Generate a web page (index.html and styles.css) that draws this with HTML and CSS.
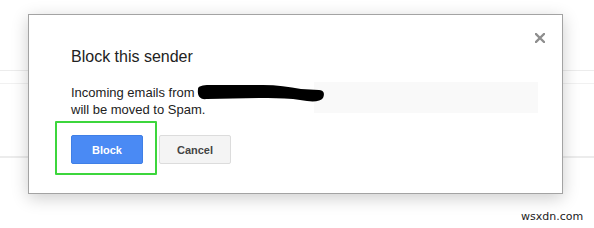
FILE: index.html
```html
<!DOCTYPE html>
<html lang="en">
<head>
    <meta charset="UTF-8">
    <title>Block this sender</title>
    <link rel="stylesheet" href="styles.css">
</head>
<body>
    <div class="mail-list">
        <div class="row row-top"></div>
        <div class="row row-thin"></div>
        <div class="row row-mid"></div>
        <div class="row"></div>
    </div>

    <div class="dialog">
        <button class="close-btn" aria-label="Close">
            <svg width="10" height="10" viewBox="0 0 10 10">
                <path d="M1 1 L9 9 M9 1 L1 9" stroke="#8e8e8e" stroke-width="2.3" stroke-linecap="square"/>
            </svg>
        </button>
        <h2 class="dialog-title">Block this sender</h2>
        <p class="dialog-text">
            Incoming emails from<br>
            will be moved to Spam.
        </p>
        <div class="dialog-buttons">
            <button class="btn btn-primary">Block</button>
            <button class="btn btn-default">Cancel</button>
        </div>

        <!-- redacted address -->
        <div class="redact-fill"></div>
        <svg class="redact-scribble" width="130" height="20" viewBox="0 0 130 20">
            <path d="M1 4 C1 1 6 0 12 0 L66 0 C80 0 92 2 104 4 L122 5 C127 5 128 9 126 13 C124 16 118 17 110 16 L96 14 C84 13 74 13 62 13 L10 14 C3 15 0 11 1 4 Z" fill="#000"/>
        </svg>

        <div class="highlight"></div>
    </div>

    <div class="watermark">wsxdn.com</div>
</body>
</html>
```

FILE: styles.css
```css
body {
    margin: 0;
    background: #fff;
    font-family: Arial, "Liberation Sans", sans-serif;
    width: 594px;
    height: 228px;
    overflow: hidden;
    position: relative;
}
.mail-list {
    display: flex;
    flex-direction: column;
}
.row {
    border-bottom: 1px solid #ececec;
}
.row-top {
    height: 70px;
}
.row-thin {
    height: 12px;
    border-bottom-color: #f1f1f1;
}
.row-mid {
    height: 72px;
}
.dialog {
    position: absolute;
    left: 28px;
    top: 14px;
    width: 491px;
    height: 146px;
    padding: 32px 0 0 42px;
    background: #fff;
    border: 1px solid #a3a3a3;
    box-shadow: 0 4px 16px rgba(0, 0, 0, 0.2);
}
.close-btn {
    position: absolute;
    top: 18px;
    right: 17px;
    width: 10px;
    height: 10px;
    padding: 0;
    border: none;
    background: none;
    display: flex;
    cursor: pointer;
}
.dialog-title {
    margin: 0;
    font-size: 16px;
    font-weight: normal;
    line-height: 20px;
    color: #222;
}
.dialog-text {
    margin: 17px 0 0 0;
    font-size: 13px;
    line-height: 17px;
    color: #222;
}
.dialog-buttons {
    display: flex;
    gap: 16px;
    margin-top: 17px;
}
.btn {
    height: 29px;
    width: 72px;
    border-radius: 2px;
    font-family: Arial, "Liberation Sans", sans-serif;
    font-size: 11px;
    font-weight: bold;
    padding: 0;
    cursor: pointer;
}
.btn-primary {
    background: #4a8af4;
    border: 1px solid #3f7fe6;
    color: #fff;
}
.btn-default {
    background: #f4f4f4;
    border: 1px solid #dcdcdc;
    color: #444;
}
.redact-fill {
    position: absolute;
    left: 285px;
    top: 67px;
    width: 224px;
    height: 31px;
    background: #f9f9f9;
}
.redact-scribble {
    position: absolute;
    left: 168px;
    top: 70px;
}
.highlight {
    position: absolute;
    left: 26px;
    top: 106px;
    width: 98px;
    height: 50px;
    border: 2px solid #3cd63c;
    border-radius: 1px;
}
.watermark {
    position: absolute;
    left: 521px;
    top: 210px;
    font-family: "DejaVu Sans", sans-serif;
    font-size: 11px;
    color: #222;
}
```
